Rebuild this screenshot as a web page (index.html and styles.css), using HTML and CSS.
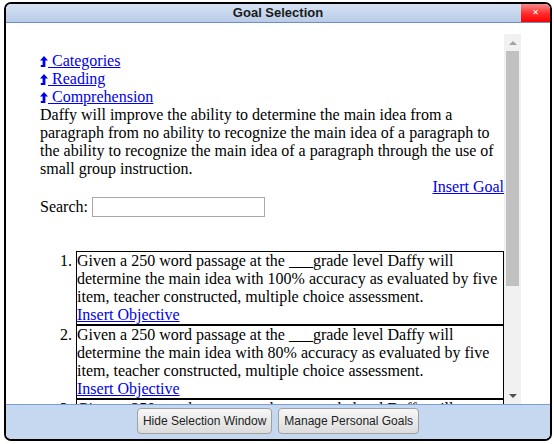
FILE: index.html
```html
<!DOCTYPE html>
<html>
<head>
<meta charset="utf-8">
<title>Goal Selection</title>
<link rel="stylesheet" href="styles.css">
</head>
<body>
<div class="dialog">
  <div class="titlebar">
    <span class="title">Goal Selection</span>
    <span class="close">&#x2715;</span>
  </div>
  <div class="body">
    <div class="scroller">
      <div class="content">
        <div class="crumb"><a href="#"><svg class="up" width="8" height="11" viewBox="0 0 8 11"><path d="M4 0 L8 4.6 L5.4 4.6 L5.4 11 L0.8 11 L0.8 9 L2.6 9 L2.6 4.6 L0 4.6 Z" fill="#0000ee"/></svg> Categories</a></div>
        <div class="crumb"><a href="#"><svg class="up" width="8" height="11" viewBox="0 0 8 11"><path d="M4 0 L8 4.6 L5.4 4.6 L5.4 11 L0.8 11 L0.8 9 L2.6 9 L2.6 4.6 L0 4.6 Z" fill="#0000ee"/></svg> Reading</a></div>
        <div class="crumb"><a href="#"><svg class="up" width="8" height="11" viewBox="0 0 8 11"><path d="M4 0 L8 4.6 L5.4 4.6 L5.4 11 L0.8 11 L0.8 9 L2.6 9 L2.6 4.6 L0 4.6 Z" fill="#0000ee"/></svg> Comprehension</a></div>
        <p class="goal">Daffy will improve the ability to determine the main idea from a paragraph from no ability to recognize the main idea of a paragraph to the ability to recognize the main idea of a paragraph through the use of small group instruction.</p>
        <div class="insert-goal"><a href="#">Insert Goal</a></div>
        <div class="search">Search: <input class="search-input" type="text"></div>
        <ol class="objectives">
          <li>Given a 250 word passage at the ___grade level Daffy will determine the main idea with 100% accuracy as evaluated by five item, teacher constructed, multiple choice assessment.<br><a href="#">Insert Objective</a></li>
          <li>Given a 250 word passage at the ___grade level Daffy will determine the main idea with 80% accuracy as evaluated by five item, teacher constructed, multiple choice assessment.<br><a href="#">Insert Objective</a></li>
          <li>Given a 250 word passage at the ___grade level Daffy will determine the main idea with 70% accuracy as evaluated by five item, teacher constructed, multiple choice assessment.<br><a href="#">Insert Objective</a></li>
        </ol>
      </div>
      <div class="scrollbar">
        <div class="sb-btn"><span class="tri-up"></span></div>
        <div class="sb-thumb"></div>
        <div class="sb-fill"></div>
        <div class="sb-btn"><span class="tri-down"></span></div>
      </div>
    </div>
  </div>
  <div class="footer">
    <button class="btn">Hide Selection Window</button>
    <button class="btn">Manage Personal Goals</button>
  </div>
</div>
</body>
</html>
```
FILE: styles.css
```css
html, body {
  margin: 0;
  padding: 0;
  background: #ffffff;
}

.dialog {
  box-sizing: border-box;
  margin: 2px 0 0 4px;
  width: 548px;
  height: 439px;
  border: 2px solid #000;
  border-radius: 7px;
  overflow: hidden;
  display: flex;
  flex-direction: column;
  background: #fff;
}

.titlebar {
  position: relative;
  flex: 0 0 auto;
  height: 18px;
  border-bottom: 1px solid #6b8fc6;
  background: linear-gradient(#d6e2f3, #b8cbe7);
  display: flex;
  justify-content: center;
  align-items: center;
}

.title {
  font: bold 13px/18px "Liberation Sans", Arial, sans-serif;
  color: #1a1a1a;
}

.close {
  position: absolute;
  right: 0;
  top: 0;
  width: 29px;
  height: 18px;
  background: linear-gradient(#f38a8a, #ff2a2a 55%, #ff0000);
  color: #fff;
  font: bold 8px/18px "DejaVu Sans", sans-serif;
  text-align: center;
}

.body {
  flex: 1 1 auto;
  padding: 11px 29px 0 30px;
  min-height: 0;
  display: flex;
}

.scroller {
  flex: 1 1 auto;
  display: flex;
  overflow: hidden;
}

.content {
  flex: 1 1 auto;
  min-width: 0;
  padding: 18px 0 0 4px;
  overflow: hidden;
  font: 16px/18px "Liberation Serif", "Times New Roman", serif;
  color: #000;
}

.content a {
  color: #0000ee;
  text-decoration: underline;
}

.up {
  vertical-align: -1px;
}

.goal {
  margin: 0;
}

.insert-goal {
  text-align: right;
}

.search {
  height: 22px;
  display: flex;
  align-items: center;
}

.search-input {
  box-sizing: border-box;
  width: 173px;
  height: 20px;
  margin: 0 0 0 4px;
  border: 1px solid #a9a9a9;
  padding: 0 2px;
  font: 13px "Liberation Sans", Arial, sans-serif;
}

.objectives {
  margin: 33px 0 0 0;
  padding: 0 0 0 36px;
}

.objectives li {
  border: 1px solid #000;
}

.scrollbar {
  flex: 0 0 17px;
  display: flex;
  flex-direction: column;
  background: #f1f1f1;
}

.sb-btn {
  flex: 0 0 17px;
  display: flex;
  align-items: center;
  justify-content: center;
}

.tri-up {
  width: 0;
  height: 0;
  border-left: 4px solid transparent;
  border-right: 4px solid transparent;
  border-bottom: 4px solid #a3a3a3;
}

.tri-down {
  width: 0;
  height: 0;
  border-left: 4px solid transparent;
  border-right: 4px solid transparent;
  border-top: 4px solid #505050;
}

.sb-thumb {
  flex: 0 0 235px;
  margin: 0 2px;
  background: #c1c1c1;
}

.sb-fill {
  flex: 1 1 auto;
}

.footer {
  flex: 0 0 auto;
  box-sizing: border-box;
  height: 35px;
  border-top: 1px solid #7b9fd4;
  background: #c6d8ef;
  display: flex;
  justify-content: center;
  align-items: flex-start;
  gap: 6px;
  padding-top: 3px;
}

.btn {
  height: 26px;
  padding: 0 5px;
  border: 1px solid #a0a0a0;
  border-radius: 4px;
  background: linear-gradient(#f7f7f7, #dcdcdc);
  color: #222;
  font: 12px "Liberation Sans", Arial, sans-serif;
}
```
